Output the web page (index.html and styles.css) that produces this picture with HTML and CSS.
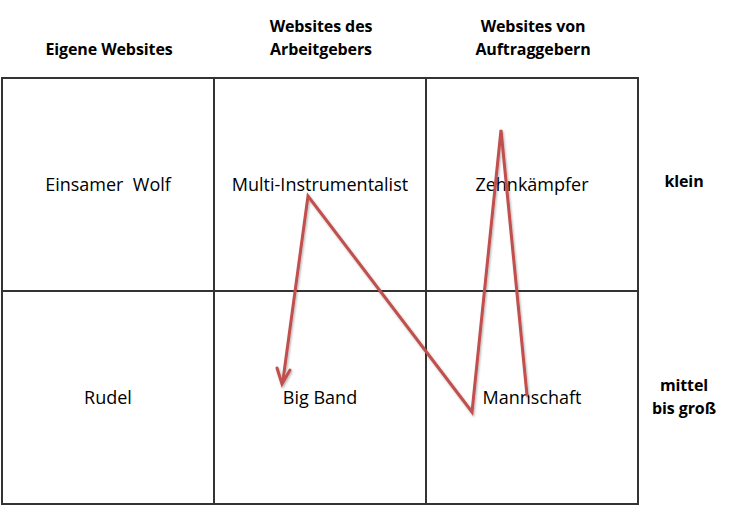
FILE: index.html
```html
<!DOCTYPE html>
<html lang="de">
<head>
<meta charset="utf-8">
<title>Matrix</title>
<link rel="stylesheet" href="styles.css">
</head>
<body>
<div class="page">
  <div class="heads">
    <div class="head">Eigene Websites</div>
    <div class="head">Websites des<br>Arbeitgebers</div>
    <div class="head">Websites von<br>Auftraggebern</div>
  </div>
  <div class="matrix">
    <div class="grid">
      <div class="cell">Einsamer&nbsp; Wolf</div>
      <div class="cell">Multi-Instrumentalist</div>
      <div class="cell">Zehnkämpfer</div>
      <div class="cell">Rudel</div>
      <div class="cell">Big Band</div>
      <div class="cell">Mannschaft</div>
    </div>
    <div class="sizes">
      <div class="size">klein</div>
      <div class="size">mittel<br>bis groß</div>
    </div>
  </div>
  <svg class="arrows" width="741" height="526" viewBox="0 0 741 526">
    <defs>
      <filter id="sh" x="-10%" y="-10%" width="120%" height="120%">
        <feDropShadow dx="1" dy="1.5" stdDeviation="1.2" flood-color="#000" flood-opacity="0.3"/>
      </filter>
    </defs>
    <g filter="url(#sh)" fill="none" stroke="#c0504d" stroke-width="3" stroke-linejoin="miter" stroke-linecap="round">
      <polyline points="527,395 501,130 472,412 308,196 283,380"/>
      <polyline points="277,368 282,384 290,370"/>
    </g>
  </svg>
</div>
</body>
</html>
```
FILE: styles.css
```css
html, body {
  margin: 0;
  padding: 0;
  background: #ffffff;
}
body {
  font-family: "Open Sans", Lato, "Liberation Sans", sans-serif;
  color: #000;
  width: 741px;
  height: 526px;
  overflow: hidden;
}
.page {
  position: relative;
  width: 741px;
  height: 526px;
  padding-left: 1px;
  box-sizing: border-box;
}
.heads {
  display: grid;
  grid-template-columns: 212px 212px 212px;
  height: 77px;
  align-items: end;
  box-sizing: border-box;
  padding: 0 0 16px 2px;
}
.head {
  text-align: center;
  font-weight: 700;
  font-size: 16px;
  line-height: 23px;
  letter-spacing: -0.1px;
}
.matrix {
  display: flex;
}
.grid {
  display: grid;
  grid-template-columns: repeat(3, 212px);
  grid-template-rows: repeat(2, 213px);
  border-left: 2px solid #333;
  border-top: 2px solid #333;
}
.cell {
  box-sizing: border-box;
  border-right: 2px solid #333;
  border-bottom: 2px solid #333;
  display: flex;
  align-items: center;
  justify-content: center;
  font-size: 18px;
  padding-bottom: 2px;
}
.sizes {
  display: grid;
  grid-template-rows: repeat(2, 213px);
  width: 88px;
  padding-left: 1px;
  padding-right: 3px;
}
.size {
  display: flex;
  align-items: center;
  justify-content: center;
  text-align: center;
  font-weight: 700;
  font-size: 16px;
  line-height: 23px;
  letter-spacing: -0.1px;
}
.size:first-child {
  padding-bottom: 4px;
}
.arrows {
  position: absolute;
  left: 0;
  top: 0;
  pointer-events: none;
}
```
